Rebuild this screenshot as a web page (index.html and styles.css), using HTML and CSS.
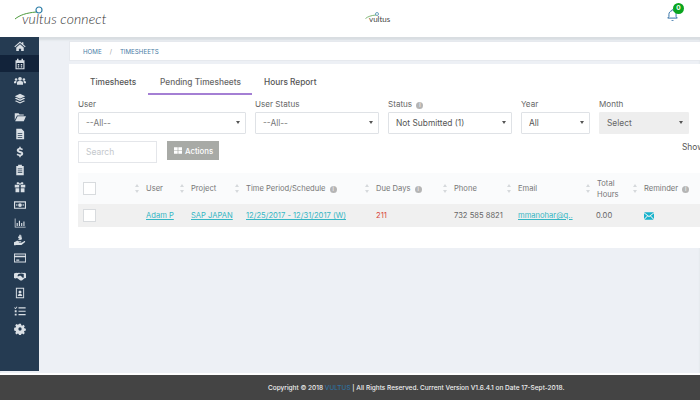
FILE: index.html
```html
<!DOCTYPE html>
<html lang="en">
<head>
<meta charset="utf-8">
<title>Timesheets</title>
<link rel="stylesheet" href="styles.css">
</head>
<body>
<header class="topbar">
  <div class="logo">
    <svg class="logo-mark" viewBox="0 0 30 14"><path d="M1 13 C6 9 12 7 22 6" fill="none" stroke="#4d9a3c" stroke-width="1"/><circle cx="25" cy="4" r="3" fill="none" stroke="#2f7fa8" stroke-width="1.2"/></svg>
    <span class="logo-text">vultus connect</span>
  </div>
  <div class="logo-small">
    <svg class="logo-small-mark" viewBox="0 0 30 14"><path d="M1 13 C6 9 12 7 22 6" fill="none" stroke="#4d9a3c" stroke-width="1.4"/><circle cx="24" cy="4" r="3" fill="none" stroke="#2f7fa8" stroke-width="1.4"/></svg>
    <span class="logo-small-text">vultus</span>
  </div>
  <div class="bell">
    <svg viewBox="0 0 16 16" class="bell-icon"><path d="M8 1.5a1 1 0 0 1 1 1v.4c2.2.5 3.4 2.3 3.4 4.4v2.5l1.4 2H2.200l1.400-2V7.300c0-2.100 1.200-3.900 3.400-4.400v-.4a1 1 0 0 1 1-1z" fill="none" stroke="#2e6da4" stroke-width="1.200"/><path d="M6.500 14a1.600 1.600 0 0 0 3 0z" fill="#2e6da4"/></svg>
    <span class="badge">0</span>
  </div>
</header>
<div class="main">
  <nav class="sidebar">
    <a class="nav-item"><svg viewBox="0 0 16 16"><path d="M8 2 0.500 8.500l1 1L8 4l6.500 5.500 1-1L12.500 6V3h-2v1.300zM3 10l5-4.300 5 4.300v4.500H9.500v-3h-3v3H3z"/></svg></a>
    <a class="nav-item active"><svg viewBox="0 0 16 16"><path d="M4 1h2v2h4V1h2v2h2v12H2V3h2zM3.500 6.500v7h9v-7zM5 8h2v2H5zm4 0h2v2H9zm-4 3h2v1.500H5zm4 0h2v1.500H9z" fill-rule="evenodd"/></svg></a>
    <a class="nav-item"><svg viewBox="0 0 16 16"><circle cx="8" cy="5" r="2.500"/><circle cx="2.800" cy="6" r="1.700"/><circle cx="13.200" cy="6" r="1.700"/><path d="M4 13v-2.500C4 9 5 8 6.500 8h3C11 8 12 9 12 10.500V13zM0 11V9.500C0 8.500 1 8 2 8h1.400C3 8.600 3 9.500 3 11zm16 0V9.500c0-1-1-1.500-2-1.500h-1.400c.4.600.4 1.500.4 3z"/></svg></a>
    <a class="nav-item"><svg viewBox="0 0 16 16"><path d="M8 1l7 3.200-7 3.300-7-3.300zM1 7.300l2-.9 5 2.300 5-2.300 2 .9-7 3.300zm0 3.500l2-.9 5 2.300 5-2.300 2 .9L8 14.100z"/></svg></a>
    <a class="nav-item"><svg viewBox="0 0 16 16"><path d="M1 3h5l1.500 1.500H13V6H4L1 12zM4.800 7H16l-3 6.500H1.500z"/></svg></a>
    <a class="nav-item"><svg viewBox="0 0 16 16"><path d="M3 1h7l3.500 3.500V15H3zM5 7v1h6V7zm0 2.500v1h6v-1zM5 12v1h6v-1z" fill-rule="evenodd"/></svg></a>
    <a class="nav-item"><svg viewBox="0 0 16 16"><path d="M7 1h2v1.600c1.500.2 2.500.8 3 1.400l-1.200 1.600C10 5 9 4.500 7.800 4.500c-1 0-1.500.4-1.500.9 0 1.500 6 1 6 4.800 0 1.700-1.200 2.800-3.300 3.100V15H7v-1.700c-1.500-.2-2.800-.9-3.500-1.700l1.300-1.600c.9.800 2 1.400 3.200 1.400 1 0 1.700-.4 1.700-1 0-1.600-6-1-6-4.800 0-1.600 1.200-2.800 3.300-3.100z"/></svg></a>
    <a class="nav-item"><svg viewBox="0 0 16 16"><path d="M3 2.500h2.500V1h5v1.500H13V15H3zM5 6v1h6V6zm0 2.500v1h6v-1zM5 11v1h6v-1z" fill-rule="evenodd"/></svg></a>
    <a class="nav-item"><svg viewBox="0 0 16 16"><path d="M1 5h6V3.800C6 4.500 3.500 4.500 3.500 3S6 1 8 3.500C10 1 12.500 1.500 12.500 3S10 4.500 9 3.800V5h6v3.500H9V5H7v3.500H1zm1 4.500h5V15H2zm7 0h5V15H9z"/></svg></a>
    <a class="nav-item"><svg viewBox="0 0 16 16"><path d="M0 3h16v10H0zM1.500 4.500v7h13v-7zM8 5.500A2.500 2.500 0 1 1 8 10.500 2.500 2.500 0 0 1 8 5.500zM3 7h1.500v2H3zm8.500 0H13v2h-1.500z" fill-rule="evenodd"/></svg></a>
    <a class="nav-item"><svg viewBox="0 0 16 16"><path d="M1 2h1v11h13.500v1H1zM3.500 8h1.500v4H3.500zm3-3H8v7H6.500zm3 3H11v4H9.500zm3-2H14v6h-1.500z"/></svg></a>
    <a class="nav-item"><svg viewBox="0 0 16 16"><path d="M7 1h2v1.200h1.500v1H9v1h1.500v3H9V8H7v-.8H5.500v-1H7v-1H5.500v-2H7zM0 11l3-1.500c1-.5 2-.5 3 0h3c1 0 1 1.500 0 1.500H6.500v.6H10l3.500-2c1-.5 2 .5 1 1.500L10 14.500H3L1.500 15H0z"/></svg></a>
    <a class="nav-item"><svg viewBox="0 0 16 16"><path d="M0 2h16v12H0zM1.200 3.200V5h13.600V3.200zM1.200 7v5.800h13.600V7zM3 10h4v1.500H3z" fill-rule="evenodd"/></svg></a>
    <a class="nav-item"><svg viewBox="0 0 16 16"><path d="M0 4.500l3-1 1 .5 3-.5 1.500.7 1.500-.7 3 .5 1-.5 2 1v6l-2 .5-3 2.500c-1 .8-2 .8-3 0L4 10.800l-2 .5-2-.5zm6 .9L4.500 8c.8.7 2 .5 2.500-.5h2l3 3 1-.4V5.300l-3-.7z" fill-rule="evenodd"/></svg></a>
    <a class="nav-item"><svg viewBox="0 0 16 16"><path d="M2.500 1h11v14h-11zM3.800 2.300v11.400h8.400V2.300zM8 4.500a2 2 0 1 1 0 4 2 2 0 0 1 0-4zM5 12c0-2 1-2.800 3-2.800s3 .8 3 2.800z" fill-rule="evenodd"/></svg></a>
    <a class="nav-item"><svg viewBox="0 0 16 16"><path d="M1 3l1 1 1.700-2 .8.7L2.100 5.500.2 3.800zM6 3h9.500v1.500H6zm-5 4h2.500v2.500H1zm5 .5h9.500V9H6zM1 11.500h2.500V14H1zm5 .5h9.500v1.500H6z"/></svg></a>
    <a class="nav-item"><svg viewBox="0 0 16 16"><path d="M6.700 1h2.600l.4 2 1.200.5 1.700-1.100 1.800 1.800-1.100 1.700.5 1.200 2 .4v2.600l-2 .4-.5 1.200 1.100 1.700-1.800 1.800-1.700-1.100-1.200.5-.4 2H6.700l-.4-2-1.200-.5-1.700 1.100-1.800-1.800 1.100-1.700-.5-1.200-2-.4V6.300l2-.4.5-1.200-1.100-1.700 1.800-1.800 1.700 1.100 1.200-.5zM8 5.800a2.200 2.200 0 1 0 0 4.400 2.200 2.200 0 0 0 0-4.400z" fill-rule="evenodd"/></svg></a>
  </nav>
  <main class="content">
    <div class="breadcrumb"><span>HOME</span><span class="sep">/</span><span>TIMESHEETS</span></div>
    <section class="card">
      <div class="tabs">
        <span class="tab tab-first">Timesheets</span>
        <span class="tab tab-active">Pending Timesheets</span>
        <span class="tab">Hours Report</span>
      </div>
      <div class="filters">
        <div class="field f-user"><label>User</label><div class="select">--All--<i class="caret"></i></div></div>
        <div class="field f-ustatus"><label>User Status</label><div class="select">--All--<i class="caret"></i></div></div>
        <div class="field f-status"><label>Status <i class="info">i</i></label><div class="select strong">Not Submitted (1)<i class="caret"></i></div></div>
        <div class="field f-year"><label>Year</label><div class="select strong">All<i class="caret"></i></div></div>
        <div class="field f-month"><label>Month</label><div class="select disabled">Select<i class="caret"></i></div></div>
      </div>
      <div class="tools">
        <div class="search">Search</div>
        <div class="actions"><svg viewBox="0 0 12 10" class="act-icon"><path d="M0 0h5.500v4.500H0zm6.500 0H12v4.500H6.500zM0 5.500h5.500V10H0zm6.500 0H12V10H6.500z"/></svg>Actions</div>
        <div class="show">Show</div>
      </div>
      <table class="grid">
        <colgroup><col class="c0"><col class="c1"><col class="c2"><col class="c3"><col class="c4"><col class="c5"><col class="c6"><col class="c7"><col class="c8"></colgroup>
        <thead>
          <tr>
            <th><span class="check"></span></th>
            <th><div class="th"><i class="sort"></i><span>User</span></div></th>
            <th><div class="th"><i class="sort"></i><span>Project</span></div></th>
            <th><div class="th"><i class="sort"></i><span>Time Period/Schedule <i class="info">i</i></span></div></th>
            <th><div class="th"><i class="sort"></i><span>Due Days <i class="info">i</i></span></div></th>
            <th><div class="th"><i class="sort"></i><span>Phone</span></div></th>
            <th><div class="th"><i class="sort"></i><span>Email</span></div></th>
            <th><div class="th"><i class="sort"></i><span class="wrap">Total Hours</span></div></th>
            <th><div class="th"><i class="sort"></i><span>Reminder <i class="info">i</i></span></div></th>
          </tr>
        </thead>
        <tbody>
          <tr>
            <td><span class="check"></span></td>
            <td class="ind"><a>Adam P</a></td>
            <td class="ind"><a>SAP JAPAN</a></td>
            <td class="ind"><a>12/25/2017 - 12/31/2017 (W)</a></td>
            <td class="ind due">211</td>
            <td class="ind">732 585 8821</td>
            <td class="ind"><a>mmanohar@q..</a></td>
            <td class="ind hrs">0.00</td>
            <td class="ind"><svg class="mail" viewBox="0 0 12 9"><path d="M0 0h12L6 4.500zM0 1.300V8l3.800-3.800zM12 1.300V8L8.200 4.200zM4.600 4.900 6 6l1.400-1.100L11.500 9H.5z"/></svg></td>
          </tr>
        </tbody>
      </table>
    </section>
  </main>
</div>
<footer class="footer"><span>Copyright © 2018 <b class="brand">VULTUS</b> | All Rights Reserved. Current Version V1.6.4.1 on Date 17-Sept-2018.</span></footer>
</body>
</html>
```
FILE: styles.css
```css
* { box-sizing: border-box; }
html, body { margin: 0; height: 100%; }
body {
  width: 700px; height: 400px; overflow: hidden; display: flex; flex-direction: column;
  font-family: "Inter", "Liberation Sans", sans-serif; font-size: 8px; color: #666; background: #fff;
}
.topbar { height: 37px; flex: none; display: flex; align-items: center; background: #fff; padding-left: 14px; }
.logo { width: 344px; display: flex; height: 37px; align-items: center; }
.logo-mark { width: 30px; height: 14px; flex: none; margin-right: -26px; margin-top: -11px; }
.logo-text { font-family: "Lato", sans-serif; font-style: italic; font-weight: 300; font-size: 14px; color: #333; letter-spacing: .1px; margin-left: 4px; }
.logo-small { width: 301px; display: flex; align-items: center; margin-left: 7px; }
.logo-small-mark { width: 15px; height: 7px; margin-right: -11px; margin-top: -7px; flex: none; }
.logo-small-text { font-family: "Lato", sans-serif; font-size: 8px; color: #444; }
.bell { position: relative; width: 14px; height: 14px; margin-top: -8px; }
.bell-icon { width: 13px; height: 14px; display: block; }
.badge { position: absolute; left: 7px; top: -5px; width: 11px; height: 11px; border-radius: 50%; background: #0aa51f; color: #fff; font-size: 6.500px; font-weight: 700; line-height: 11px; text-align: center; }
.main { flex: 1; min-height: 0; display: flex; background: #edf0f5; box-shadow: inset 0 3px 2px #d9dde1; margin-bottom: 2px; }
.sidebar { width: 39px; flex: none; background: #253b52; margin-bottom: 2px; }
.nav-item { display: flex; align-items: center; justify-content: center; height: 17.700px; }
.nav-item svg { width: 12px; height: 12px; fill: #d9dfe5; }
.nav-item.active { background: #12233a; }
.content { flex: 1; min-width: 0; padding: 4px 0 0 30px; }
.breadcrumb { height: 20px; background: #fff; border: 1px solid #e6e9ee; border-right: 0; display: flex; align-items: center; padding-left: 13px; font-size: 6.200px; color: #4a7da6; gap: 8px; }
.sep { color: #999; }
.card { margin-top: 3px; height: 184px; background: #fff; padding: 0 0 0 9px; overflow: hidden; }
.tabs { display: flex; height: 31px; }
.tab { padding: 13px 12px 0; height: 31px; font-size: 8.300px; font-weight: 500; color: #555; white-space: nowrap; }
.tab-first { width: 70px; flex: none; }
.tab-active { border-bottom: 2px solid #a47fd4; color: #666; width: 104px; flex: none; }
.filters { display: flex; gap: 9px; margin-top: 1px; }
.field { flex: none; }
.field label { display: block; height: 16px; font-size: 8.100px; line-height: 16px; color: #666; white-space: nowrap; }
.f-user { width: 168px; } .f-ustatus { width: 124px; } .f-status { width: 124px; } .f-year { width: 69px; } .f-month { width: 90px; }
.select { position: relative; height: 22px; border: 1px solid #dfe2e6; border-radius: 1px; font-size: 8.400px; line-height: 20px; padding-left: 7px; color: #777; }
.select.strong { color: #555; }
.select.disabled { background: #eee; color: #666; border-color: #eee; }
.caret { position: absolute; right: 5px; top: 8px; border: 2.500px solid transparent; border-top: 3px solid #555; border-bottom: 0; }
.info { display: inline-block; width: 7px; height: 7px; border-radius: 50%; background: #b5b5b5; color: #fff; font-size: 5.500px; line-height: 7px; text-align: center; font-style: normal; vertical-align: 0; margin-left: 2px; }
.tools { display: flex; align-items: flex-start; margin-top: 7px; height: 32px; }
.search { flex: none; width: 79px; height: 22px; border: 1px solid #e4e6ea; font-size: 8.500px; line-height: 20px; padding-left: 7px; color: #c4c8cc; }
.actions { flex: none; width: 52px; height: 19px; margin-left: 10px; background: #a8aaa6; color: #fff; font-size: 7.800px; font-weight: 500; display: flex; align-items: center; padding-left: 7px; gap: 3px; }
.act-icon { width: 8px; height: 7px; fill: #fff; }
.show { flex: none; margin-left: 463px; margin-top: 1px; font-size: 8.400px; color: #555; }
.grid { width: 622px; table-layout: fixed; border-collapse: collapse; }
.c0 { width: 53px; } .c1 { width: 45px; } .c2 { width: 55px; } .c3 { width: 130px; } .c4 { width: 78px; } .c5 { width: 64px; } .c6 { width: 79px; } .c7 { width: 47px; } .c8 { width: 71px; }
thead tr { height: 31px; background: #fafbfc; }
tbody tr { height: 23px; background: #f0f0f0; }
th, td { padding: 0; text-align: left; font-weight: 400; font-size: 7.600px; vertical-align: middle; white-space: nowrap; }
th { color: #777; }
.check { display: block; width: 13px; height: 13px; border: 1px solid #d8dbde; background: #fff; margin-left: 5px; }
.th { display: flex; align-items: center; gap: 7px; padding-left: 4px; }
.wrap { white-space: normal; width: 26px; line-height: 11px; display: block; }
.sort { width: 4px; height: 9px; flex: none; position: relative; }
.sort::before, .sort::after { content: ""; position: absolute; left: 0; border: 2px solid transparent; }
.sort::before { top: 0; border-top: 0; border-bottom: 3px solid #d6d9dc; }
.sort::after { bottom: 0; border-bottom: 0; border-top: 3px solid #d6d9dc; }
.ind { padding-left: 15px; color: #666; }
.ind a { color: #35b6c4; text-decoration: underline; }
.due { color: #d9433a; }
.hrs { padding-left: 14px; }
.mail { width: 10px; height: 8px; fill: #17b3cc; display: block; }
.footer { height: 25px; flex: none; background: #444; color: #f0f0f0; display: flex; align-items: center; padding-left: 268px; font-size: 6.500px; font-weight: 500; white-space: nowrap; }
.brand { color: #2f6f9f; font-weight: 500; }
```
